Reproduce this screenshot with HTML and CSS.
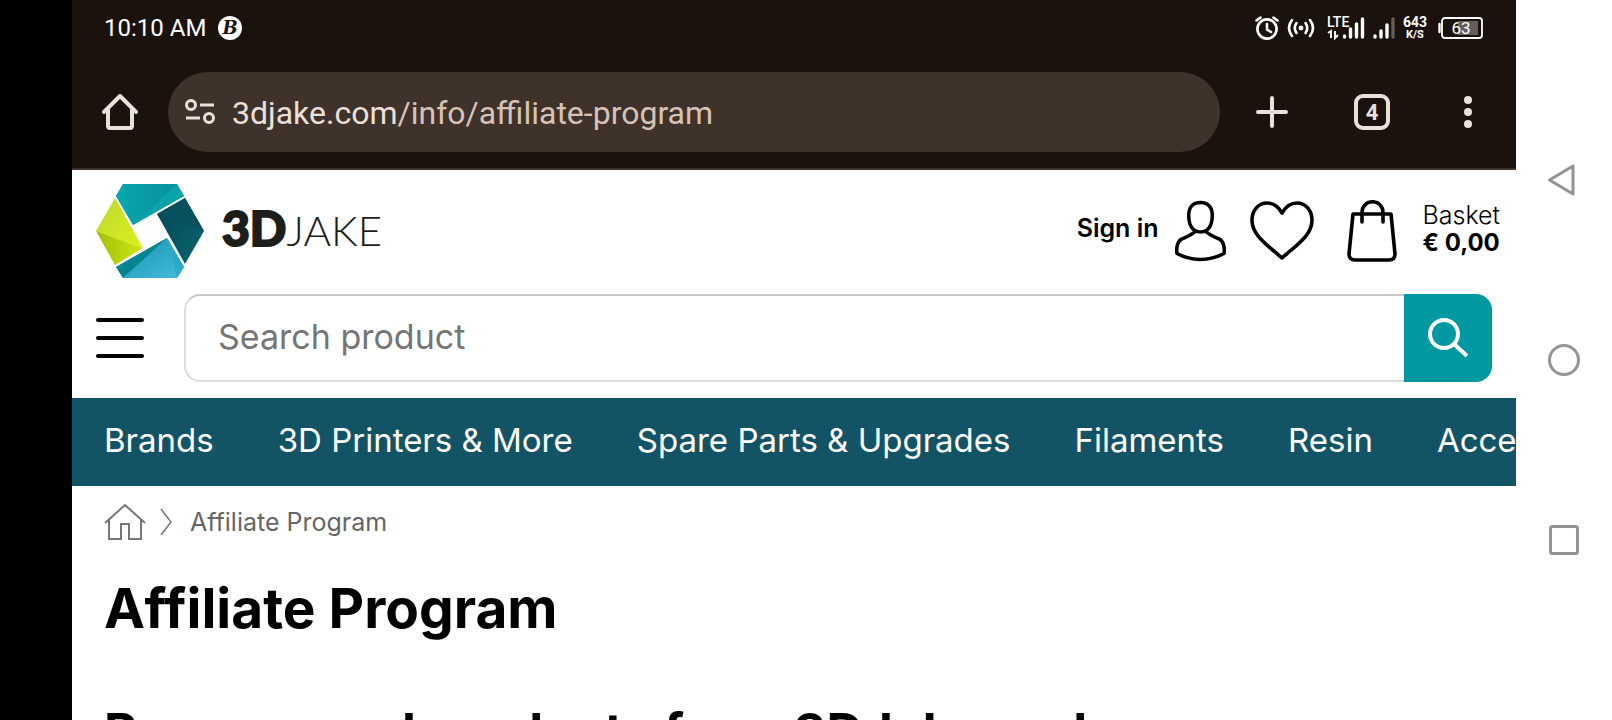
FILE: index.html
```html
<!DOCTYPE html>
<html lang="en">
<head>
  <meta charset="UTF-8">
  <meta name="viewport" content="width=device-width, initial-scale=1.0">
  <title>Affiliate Program | 3DJake</title>
  <link rel="stylesheet" href="styles.css">
</head>
<body>

  <div class="device">
    <div class="screen">

      <!-- Phone status bar -->
      <div class="status-bar">
        <span class="clock">10:10 AM</span>
        <svg class="app-badge" width="24" height="24" viewBox="0 0 24 24">
          <circle cx="12" cy="12" r="12" fill="#fff"/>
          <text x="12" y="18" text-anchor="middle" class="badge-letter">B</text>
        </svg>

        <div class="status-icons">
          <svg class="alarm" width="24" height="24" viewBox="0 0 24 24" fill="none" stroke="#fff" stroke-width="2.6" stroke-linecap="round">
            <circle cx="12" cy="13" r="9.6"/>
            <path d="M12 8v5.500l4 2.500M1.500 4.500l4-3M22.500 4.500l-4-3"/>
          </svg>
          <svg class="hotspot" width="28" height="24" viewBox="0 0 28 24" fill="none" stroke="#fff" stroke-width="2.6" stroke-linecap="round">
            <circle cx="14" cy="12" r="2.4" fill="#fff" stroke="none"/>
            <path d="M9.500 7q-3.500 5 0 10M18.500 7q3.500 5 0 10M5 4q-6 8 0 16M23 4q6 8 0 16"/>
          </svg>
          <svg class="lte" width="38" height="24" viewBox="0 0 38 24">
            <text x="0" y="11" class="tiny-label">LTE</text>
            <path d="M4 22v-7l-3 2M8 15v7l3-3" fill="none" stroke="#fff" stroke-width="2"/>
            <path d="M17.500 20v1M23.500 13v8M29.500 8v13M35.500 3v18" stroke="#fff" stroke-width="3.400" stroke-linecap="round"/>
          </svg>
          <svg class="signal" width="22" height="24" viewBox="0 0 22 24" stroke="#fff" stroke-width="3.400" stroke-linecap="round">
            <path d="M2 20v1M8 15v6M14 9v12"/>
            <path d="M20 3v18" stroke="#665e5b"/>
          </svg>
          <div class="speed"><b>643</b><small>K/S</small></div>
          <svg class="battery" width="45" height="24" viewBox="0 0 45 24">
            <rect x="20" y="5" width="20" height="14" fill="#665e5b"/>
            <rect x="4" y="2" width="40" height="20" rx="3" fill="none" stroke="#fff" stroke-width="1.800"/>
            <path d="M1.500 8v8" stroke="#fff" stroke-width="2.400" stroke-linecap="round"/>
            <text x="23" y="18" text-anchor="middle" class="battery-label">63</text>
          </svg>
        </div>
      </div>

      <!-- Browser toolbar -->
      <div class="toolbar">
        <button type="button" class="tool home" aria-label="Home">
          <svg width="36" height="36" viewBox="0 0 36 36" fill="none" stroke="#ece0db" stroke-width="4" stroke-linejoin="round" stroke-linecap="round">
            <path d="M2 18L18 2l16 16M6 15v17q0 2 2 2h20q2 0 2-2V15"/>
          </svg>
        </button>
        <div class="address">
          <svg width="30" height="26" viewBox="0 0 30 26" fill="none" stroke="#ece0db" stroke-width="3">
            <circle cx="6" cy="6" r="4.500"/>
            <circle cx="24" cy="19" r="4.500"/>
            <path d="M15 6h14M1 19h14"/>
          </svg>
          <span class="url">3djake.com<span class="url-path">/info/affiliate-program</span></span>
        </div>
        <button type="button" class="tool new-tab" aria-label="New tab">
          <svg width="32" height="32" viewBox="0 0 32 32" stroke="#ece0db" stroke-width="4" stroke-linecap="round">
            <path d="M16 2v28M2 16h28"/>
          </svg>
        </button>
        <button type="button" class="tool tabs" aria-label="Open tabs">4</button>
        <button type="button" class="tool more" aria-label="More options">
          <svg width="8" height="32" viewBox="0 0 8 32" fill="#ece0db">
            <circle cx="4" cy="4" r="4"/><circle cx="4" cy="16" r="4"/><circle cx="4" cy="28" r="4"/>
          </svg>
        </button>
      </div>

      <!-- Shop page -->
      <header class="shop-header">
        <div class="header-top">
          <a href="#" class="logo" aria-label="3DJake">
            <svg width="108" height="94" viewBox="0 0 108 94">
              <defs>
                <linearGradient id="lime" x1="0" y1="0" x2="1" y2="1"><stop offset="0" stop-color="#bed62f"/><stop offset="1" stop-color="#d9f21c"/></linearGradient>
                <linearGradient id="lime-dark" x1="0" y1="0" x2="1" y2="0"><stop offset="0" stop-color="#a3bd08"/><stop offset="1" stop-color="#cde811"/></linearGradient>
                <linearGradient id="petrol" x1="0" y1="0" x2="1" y2="1"><stop offset="0" stop-color="#04444f"/><stop offset="1" stop-color="#0a6675"/></linearGradient>
                <linearGradient id="teal" x1="0" y1="0" x2="1" y2="0"><stop offset="0" stop-color="#0aa5ad"/><stop offset="1" stop-color="#088f99"/></linearGradient>
                <linearGradient id="sky" x1="0" y1="0" x2="1" y2="1"><stop offset="0" stop-color="#1591a8"/><stop offset="1" stop-color="#45bce0"/></linearGradient>
              </defs>
              <path d="M27 0h54l7 12-51 29-17-29z" fill="url(#teal)"/>
              <path d="M27 0l10 41-17-29z" fill="#07a7ae"/>
              <path d="M81 0l7 12-51 29z" fill="#0ba3ab"/>
              <path d="M19 14l28 50-47-17z" fill="url(#lime)"/>
              <path d="M0 47l47 17-28 17z" fill="url(#lime-dark)"/>
              <path d="M89 14l19 33-19 33-28-50z" fill="url(#petrol)"/>
              <path d="M89 14l19 33-47-17z" fill="#07515e"/>
              <path d="M71 54l17 29-7 11H27l-7-11z" fill="url(#sky)"/>
              <path d="M71 54L27 94l-7-11z" fill="#078491"/>
              <path d="M71 54l17 29-7 11z" fill="#2ba9c8"/>
            </svg>
            <span class="wordmark"><b>3D</b>JAKE</span>
          </a>

          <div class="account">
            <a href="#" class="sign-in">
              <span>Sign in</span>
              <svg width="51" height="62" viewBox="0 0 52 62" fill="none" stroke="#000" stroke-width="3.6" stroke-linejoin="round">
                <path d="M26 2C18 2 14 7 14 15c0 9 3 17 12 17s12-8 12-17C38 7 34 2 26 2z"/>
                <path d="M21 31c-5 5-9 6-14 8-4 2-6 8-5 15 15 8 33 8 48 0 1-7-1-13-5-15-5-2-9-3-14-8"/>
              </svg>
            </a>
            <a href="#" class="wishlist" aria-label="Wishlist">
              <svg width="64" height="60" viewBox="0 0 64 60" fill="none" stroke="#000" stroke-width="3.6" stroke-linejoin="round">
                <path d="M32 12C28 5 22 2 17 2 8 2 2 10 2 19c0 15 14 24 30 38C48 43 62 34 62 19 62 10 56 2 47 2c-5 0-11 3-15 10z"/>
              </svg>
            </a>
            <a href="#" class="basket">
              <svg width="50" height="62" viewBox="0 0 50 62" fill="none" stroke="#000" stroke-width="3.6" stroke-linecap="round" stroke-linejoin="round">
                <path d="M6 14h38l4 40q0 6-6 6H8q-6 0-6-6z"/>
                <path d="M15 22v-9c0-15 21-15 21 0v9"/>
              </svg>
              <span class="basket-text">Basket<b>€ 0,00</b></span>
            </a>
          </div>
        </div>

        <div class="header-search">
          <button type="button" class="menu-toggle" aria-label="Menu">
            <span></span><span></span><span></span>
          </button>
          <form class="search">
            <input type="text" placeholder="Search product" aria-label="Search product">
            <button type="submit" aria-label="Search">
              <svg width="42" height="40" viewBox="0 0 42 40" fill="none" stroke="#fff" stroke-width="4">
                <circle cx="17" cy="16" r="14"/>
                <path d="M27 26l13 12"/>
              </svg>
            </button>
          </form>
        </div>
      </header>

      <nav class="categories">
        <a href="#">Brands</a>
        <a href="#">3D Printers &amp; More</a>
        <a href="#">Spare Parts &amp; Upgrades</a>
        <a href="#">Filaments</a>
        <a href="#">Resin</a>
        <a href="#">Accessories</a>
      </nav>

      <main class="content">
        <div class="breadcrumb">
          <a href="#" aria-label="Home">
            <svg width="42" height="36" viewBox="0 0 42 36" fill="none" stroke="#777" stroke-width="2">
              <path d="M1 19L21 1l20 18M5 16v19h12V20h8v15h12V16"/>
            </svg>
          </a>
          <svg class="chevron" width="12" height="28" viewBox="0 0 12 28" fill="none" stroke="#777" stroke-width="1.500">
            <path d="M1 1l10 13L1 27"/>
          </svg>
          <span>Affiliate Program</span>
        </div>
        <h1>Affiliate Program</h1>
        <h2>Recommend products from 3DJake and</h2>
      </main>
    </div>

    <!-- Phone navigation keys -->
    <div class="nav-keys">
      <button type="button" aria-label="Back">
        <svg width="32" height="32" viewBox="0 0 32 32" fill="none" stroke="#949494" stroke-width="3" stroke-linejoin="round">
          <path d="M25 2v28L1.500 16z"/>
        </svg>
      </button>
      <button type="button" aria-label="Home screen">
        <svg width="32" height="32" viewBox="0 0 32 32" fill="none" stroke="#949494" stroke-width="3"><circle cx="16" cy="16" r="14.500"/></svg>
      </button>
      <button type="button" aria-label="Recent apps">
        <svg width="32" height="32" viewBox="0 0 32 32" fill="none" stroke="#949494" stroke-width="3"><rect x="2.500" y="2.500" width="27" height="27" rx="2"/></svg>
      </button>
    </div>
  </div>

</body>
</html>
```
FILE: styles.css
```css
* {
  box-sizing: border-box;
}

body {
  margin: 0;
  font-family: Inter, "Open Sans", sans-serif;
  color: #000;
  background-color: #fff;
}

a {
  color: inherit;
  text-decoration: none;
}

button {
  padding: 0;
  border: none;
  background: none;
  cursor: pointer;
}

svg {
  display: block;
  flex-shrink: 0;
  overflow: visible;
}

.device {
  display: flex;
  height: 100vh;
  overflow: hidden;
  border-left: 72px solid #000;
}

.screen {
  flex: 1;
  min-width: 0;
  overflow: hidden;
}

/* Status bar */
.status-bar {
  display: flex;
  align-items: center;
  height: 56px;
  padding: 0 33px 0 32px;
  background-color: #1b120d;
  color: #fff;
  font-family: Roboto, sans-serif;
}

.clock {
  font-size: 24px;
}

.app-badge {
  margin-left: 12px;
}

.badge-letter {
  font: italic 900 18px "DejaVu Serif", serif;
  fill: #1b120d;
}

.status-icons {
  display: flex;
  align-items: center;
  margin-left: auto;
}

.hotspot {
  margin-left: 8px;
}

.lte {
  margin-left: 12px;
}

.signal {
  margin-left: 8px;
}

.tiny-label {
  font: 500 14px Roboto, sans-serif;
  fill: #fff;
}

.speed {
  display: flex;
  flex-direction: column;
  align-items: center;
  margin-left: 8px;
  font-size: 14px;
  line-height: 13px;
}

.speed small {
  font-size: 11px;
  font-weight: bold;
  line-height: 11px;
}

.battery {
  margin-left: 11px;
}

.battery-label {
  font: 17px Roboto, sans-serif;
  fill: #fff;
}

/* Browser toolbar */
.toolbar {
  display: flex;
  align-items: center;
  height: 114px;
  padding: 0 44px 0 30px;
  border-bottom: 2px solid #3f322b;
  background-color: #1b120d;
  font-family: Roboto, sans-serif;
}

.address {
  display: flex;
  flex: 1;
  align-items: center;
  gap: 17px;
  height: 80px;
  margin-left: 30px;
  padding: 0 17px;
  border-radius: 40px;
  background-color: #3f322b;
}

.url {
  padding-top: 2px;
  color: #ece0db;
  font-size: 32px;
}

.url-path {
  color: #d7c2b8;
}

.new-tab {
  margin-left: 36px;
}

.tabs {
  width: 36px;
  height: 36px;
  margin-left: 66px;
  border: 4px solid #ece0db;
  border-radius: 9px;
  color: #ece0db;
  font: bold 22px Roboto, sans-serif;
}

.more {
  margin-left: 74px;
}

/* Shop header */
.header-top {
  display: flex;
  align-items: center;
  justify-content: space-between;
  height: 124px;
  padding: 0 16px 2px 24px;
}

.logo {
  display: flex;
  align-items: center;
  gap: 18px;
}

.wordmark {
  padding-bottom: 4px;
  color: #1d1d1b;
  font-family: Lato, sans-serif;
  font-size: 42px;
  font-weight: 300;
  line-height: 48px;
}

.wordmark b {
  font-size: 48px;
  font-weight: 900;
  -webkit-text-stroke: 2px #1d1d1b;
}

.account,
.sign-in,
.basket {
  display: flex;
  align-items: center;
}

.sign-in {
  gap: 16px;
  font-size: 25px;
  font-weight: 600;
}

.sign-in span {
  padding-bottom: 6px;
}

.wishlist {
  margin-left: 24px;
}

.basket {
  gap: 26px;
  margin-left: 33px;
}

.basket-text {
  padding-bottom: 4px;
  font-size: 25px;
  font-weight: 300;
  line-height: 28px;
}

.basket-text b {
  display: block;
  font-size: 24px;
  font-weight: 700;
}

.header-search {
  display: flex;
  align-items: center;
  gap: 40px;
  padding: 0 24px 16px;
}

.menu-toggle {
  display: flex;
  flex-direction: column;
  gap: 14px;
  width: 48px;
}

.menu-toggle span {
  height: 4px;
  border-radius: 2px;
  background-color: #000;
}

.search {
  display: flex;
  flex: 1;
  height: 88px;
}

.search input {
  flex: 1;
  min-width: 0;
  padding: 0 32px 4px;
  border: 2px solid #ddd;
  border-top-color: #c8c8c8;
  border-right: none;
  border-radius: 16px 0 0 16px;
  font-family: inherit;
  font-size: 34px;
}

.search input::placeholder {
  color: #757575;
}

.search button {
  display: flex;
  align-items: center;
  justify-content: center;
  width: 88px;
  border-radius: 0 16px 16px 0;
  background-color: #0098a1;
}

/* Category bar */
.categories {
  display: flex;
  gap: 64px;
  padding: 0 32px 4px;
  background-color: #125366;
  color: #fff;
  font-size: 33px;
  line-height: 84px;
  white-space: nowrap;
}

/* Page content */
.content {
  padding: 16px 32px;
}

.breadcrumb {
  display: flex;
  align-items: center;
  height: 40px;
  color: #666;
  font-size: 25px;
}

.chevron {
  margin: 0 18px 0 14px;
}

h1 {
  margin: 34px 0 0;
  font-size: 55px;
  line-height: 64px;
}

h2 {
  margin: 60px 0 0;
  font-size: 51px;
  line-height: 64px;
  white-space: nowrap;
}

/* Phone navigation keys */
.nav-keys {
  display: flex;
  flex-direction: column;
  align-items: center;
  justify-content: center;
  gap: 148px;
  width: 96px;
  background-color: #fff;
}
```
